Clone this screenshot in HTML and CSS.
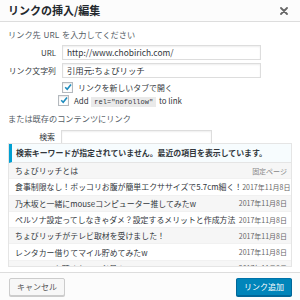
FILE: index.html
```html
<!DOCTYPE html>
<html lang="ja">
<head>
  <meta charset="UTF-8" />
  <title>リンクの挿入/編集</title>
  <link rel="stylesheet" href="styles.css">
</head>
<body>
  <div class="dialog">
    <div class="dlg-head">
      <h1>リンクの挿入/編集</h1>
      <button class="close" aria-label="閉じる">
        <svg width="8" height="8" viewBox="0 0 8 8"><path d="M1 1L7 7M7 1L1 7" stroke="#666" stroke-width="1.8" stroke-linecap="round"/></svg>
      </button>
    </div>

    <div class="dlg-body">
      <p class="howto">リンク先 URL を入力してください</p>

      <div class="field">
        <label>URL</label>
        <div class="input">http://www.chobirich.com/</div>
      </div>
      <div class="field">
        <label>リンク文字列</label>
        <div class="input">引用元:ちょびリッチ</div>
      </div>

      <div class="check one">
        <span class="box"><svg width="8" height="8" viewBox="0 0 8 8"><path d="M1.2 4.2L3.2 6.2L7 1.4" fill="none" stroke="#1e8cbe" stroke-width="1.6"/></svg></span>
        <span>リンクを新しいタブで開く</span>
      </div>
      <div class="check two">
        <span class="box"><svg width="8" height="8" viewBox="0 0 8 8"><path d="M1.2 4.2L3.2 6.2L7 1.4" fill="none" stroke="#1e8cbe" stroke-width="1.6"/></svg></span>
        <span>Add <code>rel="nofollow"</code> to link</span>
      </div>

      <p class="howto existing">または既存のコンテンツにリンク</p>

      <div class="field search">
        <label>検索</label>
        <div class="input"></div>
      </div>

      <div class="results">
        <div class="notice">検索キーワードが指定されていません。最近の項目を表示しています。</div>
        <ul>
          <li class="alt"><span class="t">ちょびリッチとは</span><span class="d type">固定ページ</span></li>
          <li><span class="t">食事制限なし！ボッコリお腹が簡単エクササイズで5.7cm細く！</span><span class="d">2017年11月8日</span></li>
          <li class="alt"><span class="t">乃木坂と一緒にmouseコンピューター推してみたw</span><span class="d">2017年11月8日</span></li>
          <li><span class="t">ペルソナ設定ってしなきゃダメ？設定するメリットと作成方法</span><span class="d">2017年11月8日</span></li>
          <li class="alt"><span class="t">ちょびリッチがテレビ取材を受けました！</span><span class="d">2017年11月8日</span></li>
          <li><span class="t">レンタカー借りてマイル貯めてみたw</span><span class="d">2017年11月8日</span></li>
          <li class="alt"><span class="t">ANAマイルを貯めたい人必見！</span><span class="d">2017年11月8日</span></li>
        </ul>
      </div>
    </div>

    <div class="dlg-foot">
      <button class="btn">キャンセル</button>
      <button class="btn primary">リンク追加</button>
    </div>
  </div>
</body>
</html>
```

FILE: styles.css
```css
:root {
  --border: #dddddd;
  --text: #32373c;
  --muted: #555d66;
  --blue: #0085ba;
}

body {
  margin: 0;
  background: #ffffff;
  color: var(--text);
  font-family: "Noto Sans CJK JP", "Noto Sans", sans-serif;
  font-size: 8px;
}

.dialog {
  height: 300px;
  display: flex;
  flex-direction: column;
  overflow: hidden;
}

.dlg-head {
  height: 21px;
  border-bottom: 1px solid var(--border);
  background: #fcfcfc;
  display: flex;
  align-items: center;
  justify-content: space-between;
  padding: 0 12px 0 8px;
}

.dlg-head h1 {
  margin: 0;
  font-size: 11px;
  font-weight: bold;
  color: #23282d;
  line-height: 21px;
}

.close {
  border: none;
  background: none;
  padding: 0;
  display: flex;
}

.dlg-body {
  flex: 1;
  padding: 0 8px;
  display: flex;
  flex-direction: column;
}

.howto {
  margin: 6px 0 0;
  line-height: 12px;
  color: var(--muted);
  font-size: 8.2px;
  word-spacing: 1px;
}

.field {
  display: flex;
  align-items: center;
  margin-top: 5px;
}

.field + .field {
  margin-top: 3px;
}

.field label {
  width: 48px;
  margin-right: 6px;
  text-align: right;
  font-size: 7.9px;
  color: var(--text);
}

.input {
  width: 199px;
  height: 15px;
  box-sizing: border-box;
  border: 1px solid var(--border);
  box-shadow: inset 0 1px 2px rgba(0, 0, 0, 0.07);
  padding: 0 4px;
  font-size: 8.4px;
  line-height: 13px;
  color: #32373c;
}

.check {
  display: flex;
  align-items: center;
  height: 12px;
  margin-top: 3px;
  padding-left: 54px;
  color: var(--text);
  font-size: 7.9px;
  white-space: nowrap;
}

.check.two {
  margin-top: 1px;
  padding-left: 50px;
}

.box {
  width: 9px;
  height: 9px;
  flex: none;
  border: 1px solid #b4b9be;
  box-shadow: inset 0 1px 2px rgba(0, 0, 0, 0.1);
  display: inline-flex;
  align-items: center;
  justify-content: center;
  margin-right: 5px;
  background: #fff;
}

code {
  font-family: "Liberation Mono", monospace;
  font-size: 7px;
  background: #eaeaea;
  padding: 1px 3px;
  margin: 0 1px;
}

.existing {
  margin-top: 6px;
}

.field.search {
  margin-top: 6px;
}

.search label {
  width: 47px;
  margin-right: 6px;
}

.search .input {
  width: 151px;
  height: 13px;
  border-bottom: none;
}

.results {
  height: 124px;
  box-sizing: border-box;
  border: 1px solid #e5e5e5;
  overflow: hidden;
}

.notice {
  height: 18px;
  line-height: 18px;
  background: #f7fcfe;
  border-left: 3px solid #00a0d2;
  border-bottom: 1px solid #e5e5e5;
  padding-left: 4px;
  font-weight: bold;
  font-size: 7.9px;
  color: #32373c;
  white-space: nowrap;
}

ul {
  list-style: none;
  margin: 0;
  padding: 0;
}

li {
  height: 16.3px;
  box-sizing: border-box;
  border-bottom: 1px solid #f1f1f1;
  display: flex;
  align-items: center;
  justify-content: space-between;
  padding: 0 4px 0 6px;
  white-space: nowrap;
}

li.alt {
  background: #f6f6f6;
}

.t {
  font-size: 7.9px;
  color: #32373c;
}

.d {
  font-size: 7px;
  color: #666;
}

.d.type {
  color: #888;
}

.dlg-foot {
  height: 28px;
  border-top: 1px solid var(--border);
  background: #fcfcfc;
  display: flex;
  align-items: center;
  justify-content: space-between;
  padding: 0 8px 0 9px;
  margin-top: 5px;
}

.btn {
  height: 18px;
  padding: 0 7px;
  border: 1px solid #cccccc;
  border-radius: 2px;
  background: #f7f7f7;
  box-shadow: 0 1px 0 #cccccc;
  color: #555;
  font-family: "Noto Sans CJK JP", sans-serif;
  font-size: 8px;
  line-height: 16px;
}

.btn.primary {
  background: var(--blue);
  border-color: #0073aa #006799 #006799;
  box-shadow: 0 1px 0 #006799;
  color: #fff;
}
```
